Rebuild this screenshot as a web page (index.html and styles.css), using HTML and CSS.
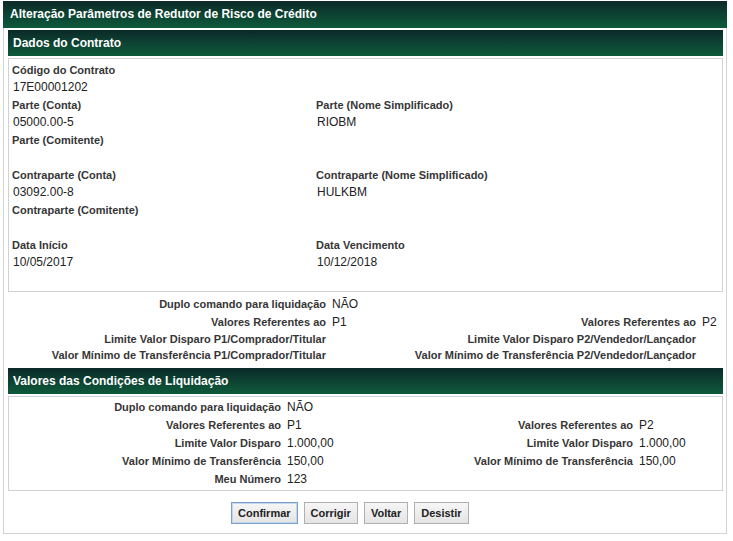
FILE: index.html
```html
<!DOCTYPE html>
<html lang="pt-BR">
<head>
<meta charset="utf-8">
<title>Alteração Parâmetros de Redutor de Risco de Crédito</title>
<link rel="stylesheet" href="styles.css">
</head>
<body>
<div class="page">
  <div class="titlebar">Alteração Parâmetros de Redutor de Risco de Crédito</div>
  <div class="frame">
    <div class="section-bar">Dados do Contrato</div>
    <div class="box contract">
      <div class="field"><div class="lbl">Código do Contrato</div><div class="val">17E00001202</div></div>
      <div class="field"></div>
      <div class="field"><div class="lbl">Parte (Conta)</div><div class="val">05000.00-5</div></div>
      <div class="field"><div class="lbl">Parte (Nome Simplificado)</div><div class="val">RIOBM</div></div>
      <div class="field"><div class="lbl">Parte (Comitente)</div><div class="val"></div></div>
      <div class="field"></div>
      <div class="field"><div class="lbl">Contraparte (Conta)</div><div class="val">03092.00-8</div></div>
      <div class="field"><div class="lbl">Contraparte (Nome Simplificado)</div><div class="val">HULKBM</div></div>
      <div class="field"><div class="lbl">Contraparte (Comitente)</div><div class="val"></div></div>
      <div class="field"></div>
      <div class="field"><div class="lbl">Data Início</div><div class="val">10/05/2017</div></div>
      <div class="field"><div class="lbl">Data Vencimento</div><div class="val">10/12/2018</div></div>
    </div>

    <div class="summary">
      <div class="k">Duplo comando para liquidação</div><div class="v">NÃO</div><div class="k"></div><div class="v"></div>
      <div class="k">Valores Referentes ao</div><div class="v">P1</div><div class="k">Valores Referentes ao</div><div class="v">P2</div>
      <div class="k sm">Limite Valor Disparo P1/Comprador/Titular</div><div class="v sm"></div><div class="k sm">Limite Valor Disparo P2/Vendedor/Lançador</div><div class="v sm"></div>
      <div class="k sm">Valor Mínimo de Transferência P1/Comprador/Titular</div><div class="v sm"></div><div class="k sm">Valor Mínimo de Transferência P2/Vendedor/Lançador</div><div class="v sm"></div>
    </div>

    <div class="section-bar">Valores das Condições de Liquidação</div>
    <div class="box cond">
      <div class="k">Duplo comando para liquidação</div><div class="v">NÃO</div><div class="k"></div><div class="v"></div>
      <div class="k">Valores Referentes ao</div><div class="v">P1</div><div class="k">Valores Referentes ao</div><div class="v">P2</div>
      <div class="k">Limite Valor Disparo</div><div class="v">1.000,00</div><div class="k">Limite Valor Disparo</div><div class="v">1.000,00</div>
      <div class="k">Valor Mínimo de Transferência</div><div class="v">150,00</div><div class="k">Valor Mínimo de Transferência</div><div class="v">150,00</div>
      <div class="k">Meu Número</div><div class="v">123</div><div class="k"></div><div class="v"></div>
    </div>

    <div class="actions">
      <button class="btn primary" type="button">Confirmar</button>
      <button class="btn" type="button">Corrigir</button>
      <button class="btn" type="button">Voltar</button>
      <button class="btn" type="button">Desistir</button>
    </div>
  </div>
</div>
</body>
</html>
```

FILE: styles.css
```css
html, body {
  margin: 0;
  padding: 0;
  background: #ffffff;
}

body {
  font-family: "Liberation Sans", Arial, sans-serif;
  color: #222;
}

.page {
  width: 724px;
  margin: 1px 0 0 3px;
}

.titlebar {
  height: 27px;
  line-height: 27px;
  padding-left: 7px;
  color: #fff;
  font-size: 12px;
  font-weight: bold;
  background: linear-gradient(to bottom, #0c2929 0%, #0d4533 55%, #0e5a3b 100%);
}

.frame {
  border: 1px solid #d4d4d4;
  border-top: none;
  padding: 2px 3px 9px 4px;
}

.section-bar {
  height: 26px;
  line-height: 26px;
  padding-left: 5px;
  color: #fff;
  font-size: 12px;
  font-weight: bold;
  background: linear-gradient(to bottom, #0c2929 0%, #0d4533 55%, #0e5a3b 100%);
}

.box {
  border: 1px solid #cfd3d3;
  margin-top: 2px;
}

.contract {
  display: grid;
  grid-template-columns: 304px 1fr;
  padding: 2px 3px 20px 3px;
}

.field {
  height: 35px;
}

.lbl {
  height: 18px;
  line-height: 18px;
  font-size: 11px;
  font-weight: bold;
  color: #363636;
}

.val {
  height: 17px;
  line-height: 17px;
  font-size: 12px;
  color: #222;
  padding-left: 1px;
}

.summary {
  display: grid;
  grid-template-columns: 318px 60px 298px 1fr;
  column-gap: 6px;
  padding: 3px 0 5px 0;
}

.k {
  text-align: right;
  font-size: 11px;
  font-weight: bold;
  color: #363636;
  height: 18px;
  line-height: 18px;
  white-space: nowrap;
}

.v {
  font-size: 12px;
  color: #222;
  height: 18px;
  line-height: 18px;
}

.summary .sm {
  height: 16px;
  line-height: 16px;
}

.cond {
  display: grid;
  grid-template-columns: 272px 160px 180px 1fr;
  column-gap: 6px;
  padding: 1px 0 2px 0;
}

.actions {
  display: flex;
  gap: 6px;
  padding: 11px 0 0 223px;
}

.btn {
  font-family: "Liberation Sans", Arial, sans-serif;
  font-size: 11px;
  font-weight: bold;
  color: #222;
  height: 22px;
  padding: 0 6px;
  border: 1px solid #b0b0b0;
  border-radius: 0;
  background: linear-gradient(to bottom, #f6f6f6 0%, #e4e4e4 100%);
}

.btn.primary {
  border: 1px solid #7c9fcc;
  box-shadow: inset 0 0 0 1px #c4d6ee;
}
```
